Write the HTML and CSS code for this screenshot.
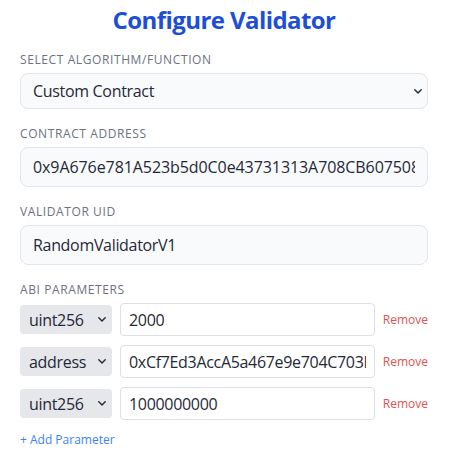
FILE: index.html
```html
<!DOCTYPE html>
<html lang="en">
<head>
<meta charset="utf-8">
<title>Configure Validator</title>
<link rel="stylesheet" href="styles.css">
</head>
<body>
<div class="panel">
  <h1 class="title">Configure Validator</h1>
  <div class="field">
    <label class="label">Select Algorithm/Function</label>
    <div class="select-wrap">
      <select class="big-select">
        <option>Custom Contract</option>
      </select>
      <svg class="chev chev-big" width="8" height="5" viewBox="0 0 8 5"><path d="M0.8 0.8 L4 4 L7.2 0.8" fill="none" stroke="#1f2937" stroke-width="1.4" stroke-linecap="round" stroke-linejoin="round"/></svg>
    </div>
  </div>
  <div class="field">
    <label class="label">Contract Address</label>
    <input class="big-input addr" type="text" value="0x9A676e781A523b5d0C0e43731313A708CB607508">
  </div>
  <div class="field">
    <label class="label">Validator UID</label>
    <input class="big-input" type="text" value="RandomValidatorV1">
  </div>
  <div class="field">
    <label class="label">ABI Parameters</label>
    <div class="params">
      <div class="param-row">
        <div class="type-wrap">
          <select class="type-select"><option>uint256</option></select>
          <svg class="chev chev-small" width="8" height="5" viewBox="0 0 8 5"><path d="M0.8 0.8 L4 4 L7.2 0.8" fill="none" stroke="#1f2937" stroke-width="1.4" stroke-linecap="round" stroke-linejoin="round"/></svg>
        </div>
        <input class="param-input" type="text" value="2000">
        <span class="remove">Remove</span>
      </div>
      <div class="param-row">
        <div class="type-wrap">
          <select class="type-select"><option>address</option></select>
          <svg class="chev chev-small" width="8" height="5" viewBox="0 0 8 5"><path d="M0.8 0.8 L4 4 L7.2 0.8" fill="none" stroke="#1f2937" stroke-width="1.4" stroke-linecap="round" stroke-linejoin="round"/></svg>
        </div>
        <input class="param-input" type="text" value="0xCf7Ed3AccA5a467e9e704C703E8D87F634fB0Fc9">
        <span class="remove">Remove</span>
      </div>
      <div class="param-row">
        <div class="type-wrap">
          <select class="type-select"><option>uint256</option></select>
          <svg class="chev chev-small" width="8" height="5" viewBox="0 0 8 5"><path d="M0.8 0.8 L4 4 L7.2 0.8" fill="none" stroke="#1f2937" stroke-width="1.4" stroke-linecap="round" stroke-linejoin="round"/></svg>
        </div>
        <input class="param-input" type="text" value="1000000000">
        <span class="remove">Remove</span>
      </div>
    </div>
    <div class="add">+ Add Parameter</div>
  </div>
</div>
</body>
</html>
```

FILE: styles.css
```css
* { box-sizing: border-box; }
html, body { margin: 0; padding: 0; background: #ffffff; }
body {
  font-family: "Open Sans", "Noto Sans", sans-serif;
  color: #1f2937;
}
.panel {
  width: 408px;
  margin-left: 20px;
  padding-top: 4px;
  display: flex;
  flex-direction: column;
}
.title {
  margin: 0 0 16px 0;
  font-size: 24px;
  line-height: 32px;
  font-weight: 700;
  letter-spacing: -0.024em;
  color: #1d4ed8;
  text-align: center;
}
.field {
  display: flex;
  flex-direction: column;
  margin-bottom: 17px;
}
.label {
  font-size: 12px;
  line-height: 16px;
  letter-spacing: 0.05em;
  text-transform: uppercase;
  color: #6b7280;
  margin-bottom: 5px;
}
.select-wrap, .type-wrap {
  position: relative;
  display: flex;
}
.chev {
  position: absolute;
  pointer-events: none;
}
.chev-big { right: 6px; top: 16px; }
.big-select, .big-input {
  width: 100%;
  font-family: inherit;
  font-size: 16px;
  letter-spacing: -0.02em;
  color: #1f2937;
  background-color: #f9fafb;
  border: 1px solid #e2e5e9;
  border-radius: 8px;
  padding: 0 12px;
  outline: none;
}
.big-select { height: 36px; appearance: none; -webkit-appearance: none; }
.big-input { height: 40px; }
.addr { letter-spacing: -0.005em; }
.params {
  display: flex;
  flex-direction: column;
  gap: 9px;
}
.param-row {
  display: flex;
  align-items: center;
  gap: 8px;
}
.type-wrap { width: 92px; flex: none; }
.type-select {
  width: 92px;
  height: 29px;
  appearance: none;
  -webkit-appearance: none;
  font-family: inherit;
  font-size: 16px;
  letter-spacing: -0.02em;
  color: #1f2937;
  background-color: #e5e7eb;
  border: none;
  border-radius: 4px;
  padding: 0 8px 0 9px;
  outline: none;
}
.chev-small { right: 6px; top: 12px; }
.param-input {
  flex: 1;
  min-width: 0;
  height: 33px;
  font-family: inherit;
  font-size: 16px;
  letter-spacing: -0.02em;
  color: #1f2937;
  background: #ffffff;
  border: 1px solid #dcdfe4;
  border-radius: 4px;
  padding: 0 8px;
  outline: none;
}
.remove {
  font-size: 12px;
  color: #e05252;
}
.add {
  margin-top: 12px;
  font-size: 12px;
  line-height: 16px;
  color: #3b82f6;
}
```
